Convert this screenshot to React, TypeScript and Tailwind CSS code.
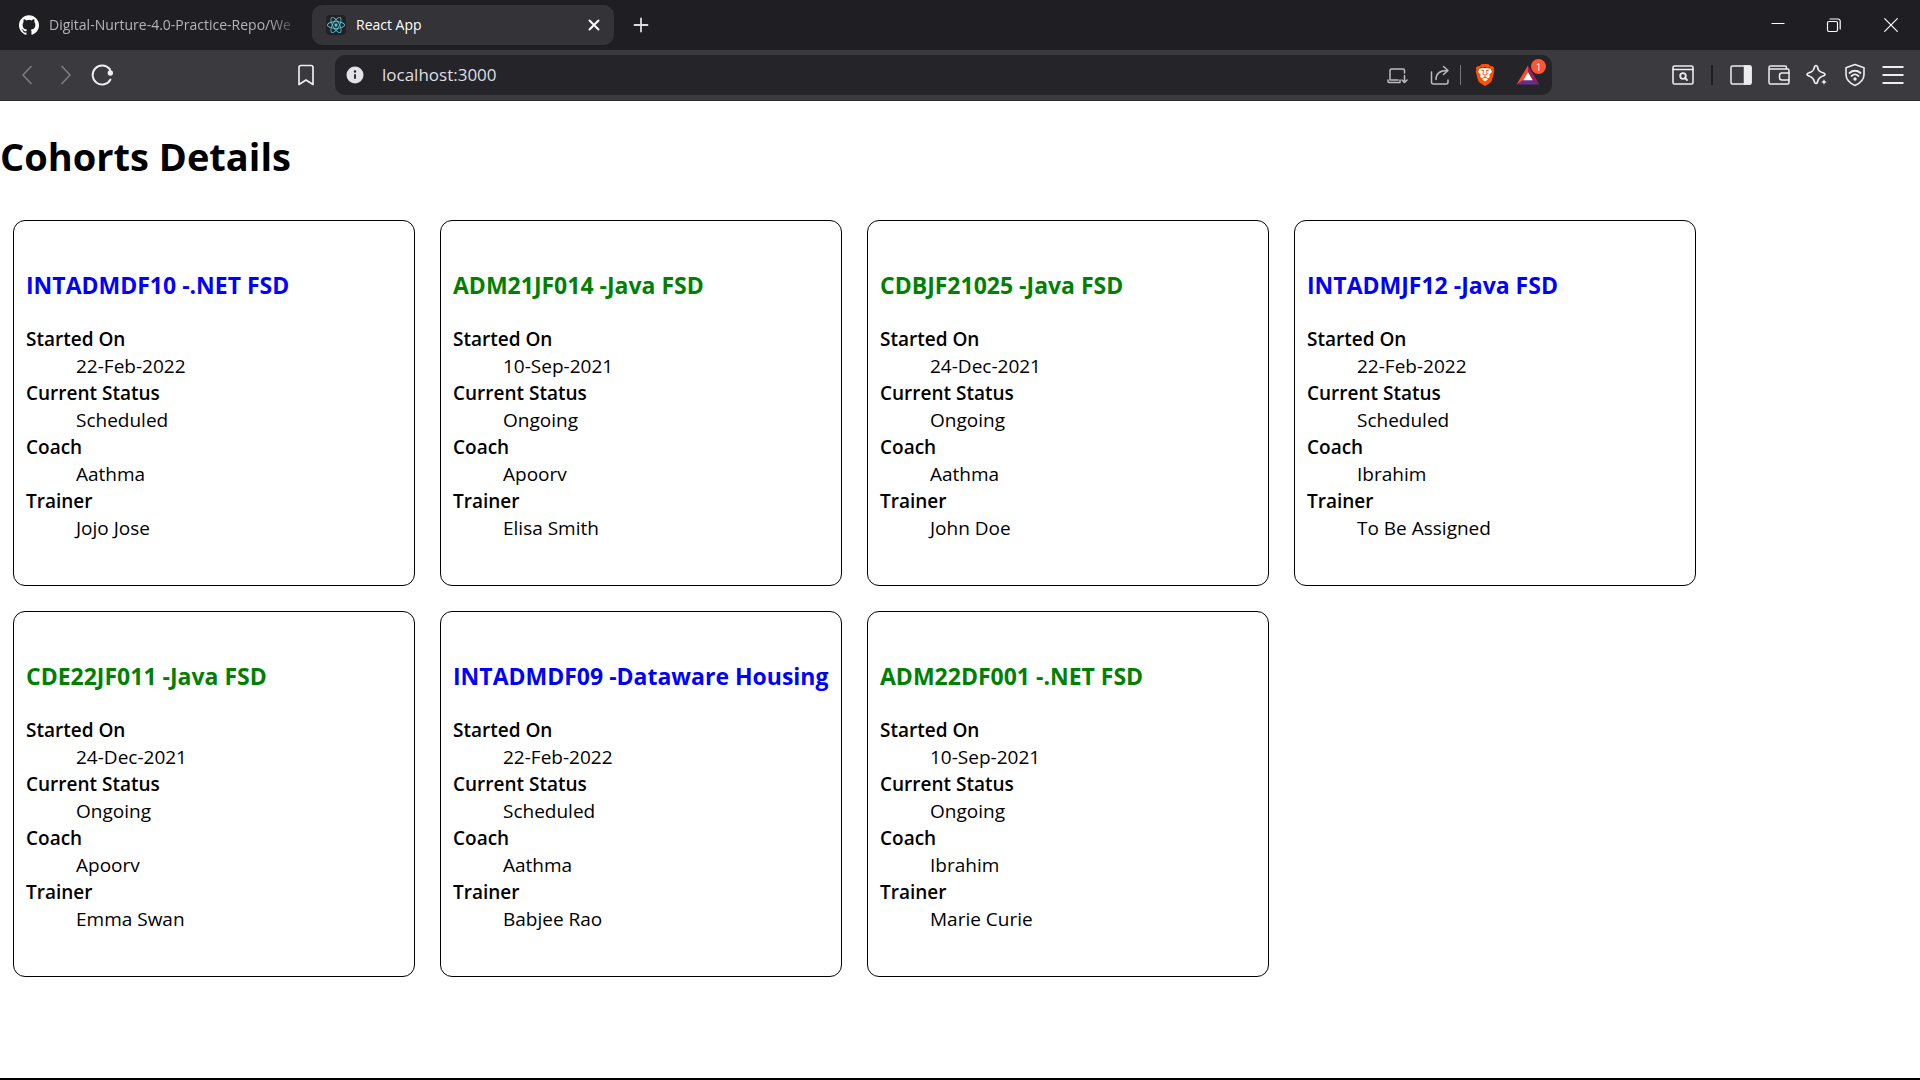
import type { ReactNode } from "react";
import { SiBrave, SiGithub, SiReact } from "react-icons/si";

type Cohort = {
  code: string;
  track: string;
  startedOn: string;
  status: "Scheduled" | "Ongoing";
  coach: string;
  trainer: string;
};

const cohorts: Cohort[] = [
  { code: "INTADMDF10", track: ".NET FSD", startedOn: "22-Feb-2022", status: "Scheduled", coach: "Aathma", trainer: "Jojo Jose" },
  { code: "ADM21JF014", track: "Java FSD", startedOn: "10-Sep-2021", status: "Ongoing", coach: "Apoorv", trainer: "Elisa Smith" },
  { code: "CDBJF21025", track: "Java FSD", startedOn: "24-Dec-2021", status: "Ongoing", coach: "Aathma", trainer: "John Doe" },
  { code: "INTADMJF12", track: "Java FSD", startedOn: "22-Feb-2022", status: "Scheduled", coach: "Ibrahim", trainer: "To Be Assigned" },
  { code: "CDE22JF011", track: "Java FSD", startedOn: "24-Dec-2021", status: "Ongoing", coach: "Apoorv", trainer: "Emma Swan" },
  { code: "INTADMDF09", track: "Dataware Housing", startedOn: "22-Feb-2022", status: "Scheduled", coach: "Aathma", trainer: "Babjee Rao" },
  { code: "ADM22DF001", track: ".NET FSD", startedOn: "10-Sep-2021", status: "Ongoing", coach: "Ibrahim", trainer: "Marie Curie" },
];

function Icon({ children, className = "" }: { children: ReactNode; className?: string }) {
  return (
    <svg
      viewBox="0 0 24 24"
      fill="none"
      stroke="currentColor"
      strokeWidth="1.5"
      strokeLinecap="round"
      strokeLinejoin="round"
      aria-hidden="true"
      className={`size-6 shrink-0 ${className}`}
    >
      {children}
    </svg>
  );
}

function IconButton({ label, className = "", children }: { label: string; className?: string; children: ReactNode }) {
  return (
    <button type="button" aria-label={label} className={`flex shrink-0 items-center justify-center ${className}`}>
      {children}
    </button>
  );
}

function TabStrip() {
  return (
    <div className="flex h-[50px] items-center bg-[#1f1e23]">
      <a href="#repo" className="flex w-[312px] shrink-0 items-center gap-2.5 pr-3 pl-[19px] text-[#b5b5b8]">
        <SiGithub className="size-5 shrink-0 text-white" aria-hidden="true" />
        <span className="flex-1 text-[14px] leading-5 whitespace-nowrap [mask-image:linear-gradient(to_right,black_88%,transparent)]">
          Digital-Nurture-4.0-Practice-Repo/We
        </span>
      </a>
      <div className="flex h-10 w-[302px] shrink-0 items-center rounded-[10px] bg-[#343338] pr-2 pl-3.5 text-white">
        <span className="flex size-5 items-center justify-center rounded-sm bg-[#222222] text-[#58c4dc]">
          <SiReact className="size-[18px]" aria-hidden="true" />
        </span>
        <a href="#app" className="ml-2.5 flex-1 text-[14px] leading-5">
          React App
        </a>
        <IconButton label="Close tab" className="size-6">
          <Icon>
            <path d="M7.5 7.5l9 9M16.5 7.5l-9 9" strokeWidth="2" />
          </Icon>
        </IconButton>
      </div>
      <IconButton label="New tab" className="ml-[15px] size-6 text-[#dddddf]">
        <Icon>
          <path d="M12 5.5v13M5.5 12h13" strokeWidth="1.8" />
        </Icon>
      </IconButton>
      <div className="ml-auto flex items-center text-white">
        <IconButton label="Minimize" className="h-[50px] w-14">
          <Icon>
            <path d="M5.5 10.5h13" strokeWidth="1" strokeLinecap="butt" />
          </Icon>
        </IconButton>
        <IconButton label="Restore" className="h-[50px] w-14">
          <Icon>
            <rect x="5.5" y="8.5" width="10" height="10" rx="1.5" strokeWidth="1.2" />
            <path d="M8 6h8a2.2 2.2 0 0 1 2.2 2.2V16" strokeWidth="1.2" />
          </Icon>
        </IconButton>
        <IconButton label="Close" className="h-[50px] w-[58px]">
          <Icon>
            <path d="M5.7 5.7l12.6 12.6M18.3 5.7L5.7 18.3" strokeWidth="1.2" />
          </Icon>
        </IconButton>
      </div>
    </div>
  );
}

function BraveRewards() {
  return (
    <IconButton label="Brave Rewards, 1 notification" className="relative size-6">
      <svg viewBox="0 0 24 24" className="size-6" aria-hidden="true">
        <path d="M12 2.5L0.5 21.5L7.5 17L12 9z" fill="#ff4b2b" />
        <path d="M12 2.5L23.5 21.5L16.5 17L12 9z" fill="#a3195b" />
        <path d="M0.5 21.5H23.5L16.5 17H7.5z" fill="#662d91" />
        <path d="M12 9L16.8 17.2H7.2z" fill="#ffffff" />
      </svg>
      <span className="absolute -top-1 left-[15px] flex size-[15px] items-center justify-center rounded-full bg-[#ff5530] text-[10px] leading-none text-white">
        1
      </span>
    </IconButton>
  );
}

function Toolbar() {
  return (
    <div className="flex h-[51px] items-center border-b border-[#2b2a2f] bg-[#3b3a3f] text-[#ededef]">
      <div className="flex w-[335px] shrink-0 items-center pl-[15px]">
        <IconButton label="Back" className="size-6 text-[#7f7e83]">
          <Icon>
            <path d="M16.5 3L8 12l8.500 9" strokeLinecap="butt" />
          </Icon>
        </IconButton>
        <IconButton label="Forward" className="ml-[15px] size-6 text-[#7f7e83]">
          <Icon>
            <path d="M7.500 3L16 12l-8.500 9" strokeLinecap="butt" />
          </Icon>
        </IconButton>
        <IconButton label="Reload" className="ml-3 size-6">
          <Icon>
            <path d="M20.500 16.500A9.500 9.500 0 1 1 19.500 6" strokeWidth="1.900" />
            <circle cx="20.300" cy="10" r="2.700" fill="currentColor" stroke="none" />
            <path d="M19.500 5.500l1.300 4" strokeWidth="1.900" />
          </Icon>
        </IconButton>
        <IconButton label="Bookmark this page" className="mr-[17px] ml-auto size-6">
          <Icon>
            <path d="M7 2.500h10a2 2 0 0 1 2 2v17L12 17l-7 4.500v-17a2 2 0 0 1 2-2z" strokeWidth="1.700" />
          </Icon>
        </IconButton>
      </div>
      <div className="flex h-10 min-w-0 flex-1 items-center rounded-[10px] bg-[#252429] pr-3 pl-2">
        <IconButton label="Site information" className="size-6">
          <svg viewBox="0 0 24 24" className="size-6" aria-hidden="true">
            <circle cx="12" cy="12" r="8.500" fill="#e2e2e8" />
            <path d="M12 11.200v4.600" stroke="#252429" strokeWidth="1.900" />
            <circle cx="12" cy="8.500" r="1.200" fill="#252429" />
          </svg>
        </IconButton>
        <input
          type="text"
          aria-label="Address"
          defaultValue="localhost:3000"
          className="ml-[15px] min-w-0 flex-1 bg-transparent text-[17px] leading-6 text-[#dfdfe3] outline-none"
        />
        <IconButton label="Install app" className="size-6 text-[#bcbcc0]">
          <Icon>
            <path d="M13 17H5V7.500A1.500 1.500 0 0 1 6.500 6H18a1.500 1.500 0 0 1 1.500 1.500V10" />
            <path d="M3 17v1.500a1 1 0 0 0 1 1h11V17" />
            <path d="M19.500 12.500v6.500M17 17l2.500 2.500L22 17" />
          </Icon>
        </IconButton>
        <IconButton label="Share" className="ml-[19px] size-6 text-[#bcbcc0]">
          <Icon>
            <path d="M3.500 9v10a2 2 0 0 0 2 2H18a2 2 0 0 0 2-2v-2" />
            <path d="M8 16.500C8 10.500 11 7.500 19.500 7.500M15.500 3.500l4.500 4-4.500 4" />
          </Icon>
        </IconButton>
        <span className="ml-2 h-5 w-px bg-[#77767b]" />
        <IconButton label="Brave Shields" className="ml-3 size-6">
          <svg viewBox="0 0 24 24" className="size-6" aria-hidden="true">
            <path d="M6 5.500L12 5l6 .5 1.500 5-2 5L12 20l-5.500-4.500-2-5z" fill="#ffffff" />
            <SiBrave x="1" y="1" width="22" height="22" size={22} color="#ff5000" />
          </svg>
        </IconButton>
        <span className="ml-[19px] flex">
          <BraveRewards />
        </span>
      </div>
      <div className="flex w-[368px] shrink-0 items-center justify-end gap-[14px] pr-[15px]">
        <IconButton label="Search tabs" className="size-6">
          <Icon>
            <rect x="2" y="3" width="20" height="18" rx="1.500" strokeWidth="1.600" />
            <path d="M2 6.500h20" strokeWidth="1.600" />
            <circle cx="12" cy="13" r="2.800" strokeWidth="1.800" />
            <path d="M14 15l2 2" strokeWidth="1.800" />
          </Icon>
        </IconButton>
        <span className="mx-0.5 h-5 w-0.5 bg-[#1f1e23]" />
        <IconButton label="Sidebar" className="size-6">
          <Icon>
            <rect x="2" y="3" width="20" height="18" rx="1.500" />
            <path d="M15.500 3H20.500A1.500 1.500 0 0 1 22 4.500V19.500A1.500 1.500 0 0 1 20.500 21H15.500z" fill="currentColor" />
          </Icon>
        </IconButton>
        <IconButton label="Wallet" className="size-6">
          <Icon>
            <path d="M22 10V7.500A1.500 1.500 0 0 0 20.500 6H2V4.500A1.500 1.500 0 0 1 3.500 3H18a1.500 1.500 0 0 1 1.500 1.500V6M2 6v13.500A1.500 1.500 0 0 0 3.500 21H20.500A1.500 1.500 0 0 0 22 19.500V17" />
            <path d="M22 10h-7a2.500 2.500 0 0 0-2.500 2.500v2A2.500 2.500 0 0 0 15 17h7z" />
          </Icon>
        </IconButton>
        <IconButton label="Leo AI" className="size-6">
          <Icon>
            <path d="M11 2.500c.9 0 1.300.7 1.500 1.500.8 3.500 1.700 4.600 5.500 5.800 1 .3 2 .7 2 1.700s-1 1.300-2 1.500c-3.800 1.100-4.800 2.500-5.500 6-.2.900-.6 1.500-1.500 1.500s-1.300-.6-1.500-1.500c-.8-3.500-1.800-4.900-5.500-6-1-.3-2-.5-2-1.500s1-1.400 2-1.700c3.700-1.200 4.700-2.300 5.500-5.800.2-.8.6-1.500 1.500-1.500z" strokeWidth="1.700" />
            <path d="M19 15c.5 2.700 1.200 3.300 4 4-2.800.7-3.500 1.300-4 4-.5-2.700-1.200-3.300-4-4 2.800-.7 3.500-1.300 4-4z" fill="currentColor" stroke="#3b3a3f" strokeWidth="0.800" />
          </Icon>
        </IconButton>
        <IconButton label="VPN" className="size-6">
          <Icon>
            <path d="M12 1.500l9 3.200v6.800c0 5-3.500 8.500-9 11-5.500-2.500-9-6-9-11V4.700z" strokeWidth="1.600" />
            <path d="M6.500 10c3.200-3 7.800-3 11 0M8.500 13c2.100-1.900 4.900-1.900 7 0" strokeWidth="1.800" />
            <circle cx="12" cy="16" r="1.700" fill="currentColor" stroke="none" />
          </Icon>
        </IconButton>
        <IconButton label="Menu" className="size-6">
          <Icon>
            <path d="M1.500 4h21M1.500 12h21M1.500 20h21" strokeWidth="1.800" strokeLinecap="butt" />
          </Icon>
        </IconButton>
      </div>
    </div>
  );
}

function CohortCard({ cohort }: { cohort: Cohort }) {
  const details = [
    ["Started On", cohort.startedOn],
    ["Current Status", cohort.status],
    ["Coach", cohort.coach],
    ["Trainer", cohort.trainer],
  ];
  return (
    <article className="w-[402px] rounded-xl border border-black px-3 pt-12 pb-[43px]">
      <h3
        className={`text-[23px] leading-8 font-bold whitespace-nowrap ${
          cohort.status === "Ongoing" ? "text-[#008000]" : "text-[#0000ff]"
        }`}
      >
        {cohort.code} -{cohort.track}
      </h3>
      <dl className="mt-[25px] text-[19px] leading-[27px]">
        {details.map(([label, value]) => (
          <div key={label}>
            <dt className="font-semibold">{label}</dt>
            <dd className="ml-[50px]">{value}</dd>
          </div>
        ))}
      </dl>
    </article>
  );
}

export default function App() {
  return (
    <div className="flex min-h-screen flex-col border-b-2 border-black bg-white font-['Open_Sans','Noto_Sans',sans-serif] text-black">
      <header>
        <TabStrip />
        <Toolbar />
      </header>
      <main className="flex-1">
        <h1 className="pt-7 text-[38px] leading-[54px] font-bold">Cohorts Details</h1>
        <section aria-label="Cohorts" className="mt-[37px] flex flex-wrap gap-[25px] px-[13px] pb-[13px]">
          {cohorts.map((cohort) => (
            <CohortCard key={cohort.code} cohort={cohort} />
          ))}
        </section>
      </main>
    </div>
  );
}
